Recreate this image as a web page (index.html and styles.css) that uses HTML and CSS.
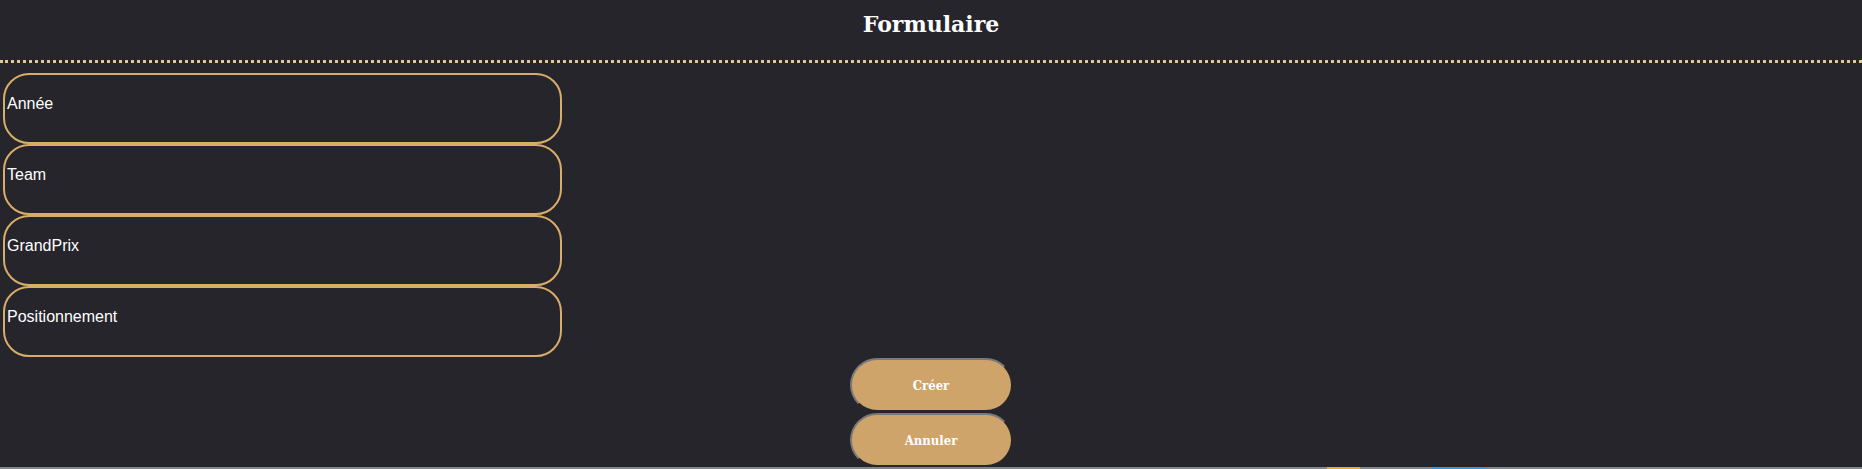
FILE: index.html
```html
<!DOCTYPE html>
<html lang="fr">
<head>
<meta charset="utf-8">
<title>Formulaire</title>
<link rel="stylesheet" href="styles.css">
</head>
<body>
<header class="page-header">
  <h1 class="page-title">Formulaire</h1>
</header>
<form class="form">
  <div class="field"><label class="field-label">Année</label></div>
  <div class="field"><label class="field-label">Team</label></div>
  <div class="field"><label class="field-label">GrandPrix</label></div>
  <div class="field"><label class="field-label">Positionnement</label></div>
  <div class="actions">
    <button type="button" class="btn">Créer</button>
    <button type="button" class="btn">Annuler</button>
  </div>
</form>
<footer class="footer">
  <span class="logo logo-yellow"></span>
  <span class="logo logo-blue"></span>
</footer>
</body>
</html>
```
FILE: styles.css
```css
html, body {
  margin: 0;
  padding: 0;
  background: #26252b;
  height: 100%;
}
body {
  font-family: "Liberation Sans", Arial, sans-serif;
  color: #ffffff;
  display: flex;
  flex-direction: column;
}
.page-header {
  border-bottom: 3px dotted #e2c890;
  box-sizing: border-box;
  height: 63px;
}
.page-title {
  margin: 0;
  padding-top: 10px;
  text-align: center;
  font-family: "DejaVu Serif", "Liberation Serif", serif;
  font-weight: bold;
  font-size: 22px;
  line-height: 28px;
  color: #ffffff;
}
.form {
  padding: 10px 0 0 3px;
  display: flex;
  flex-direction: column;
}
.field {
  width: 559px;
  height: 71px;
  box-sizing: border-box;
  border: 2px solid #d8ad68;
  border-radius: 26px;
  padding: 20px 2px 0;
}
.field-label {
  display: block;
  font-size: 16px;
  line-height: 18px;
  color: #ffffff;
}
.actions {
  display: flex;
  flex-direction: column;
  align-items: center;
  gap: 1px;
  margin-left: -3px;
  padding-top: 1px;
}
.btn {
  width: 163px;
  height: 54px;
  box-sizing: border-box;
  border: 2px outset #7c7a78;
  border-radius: 27px;
  background: #cea46a;
  color: #ffffff;
  font-family: "DejaVu Serif", "Liberation Serif", serif;
  font-stretch: condensed;
  font-weight: bold;
  font-size: 13px;
  padding: 0;
}
.footer {
  flex: 1;
  background: #80868a;
  display: flex;
  align-items: flex-start;
  min-height: 2px;
}
.logo {
  display: block;
  height: 4px;
}
.logo-yellow {
  width: 33px;
  margin-left: 1327px;
  background: #e6a93a;
}
.logo-blue {
  width: 55px;
  margin-left: 72px;
  background: #3a95db;
}
```
